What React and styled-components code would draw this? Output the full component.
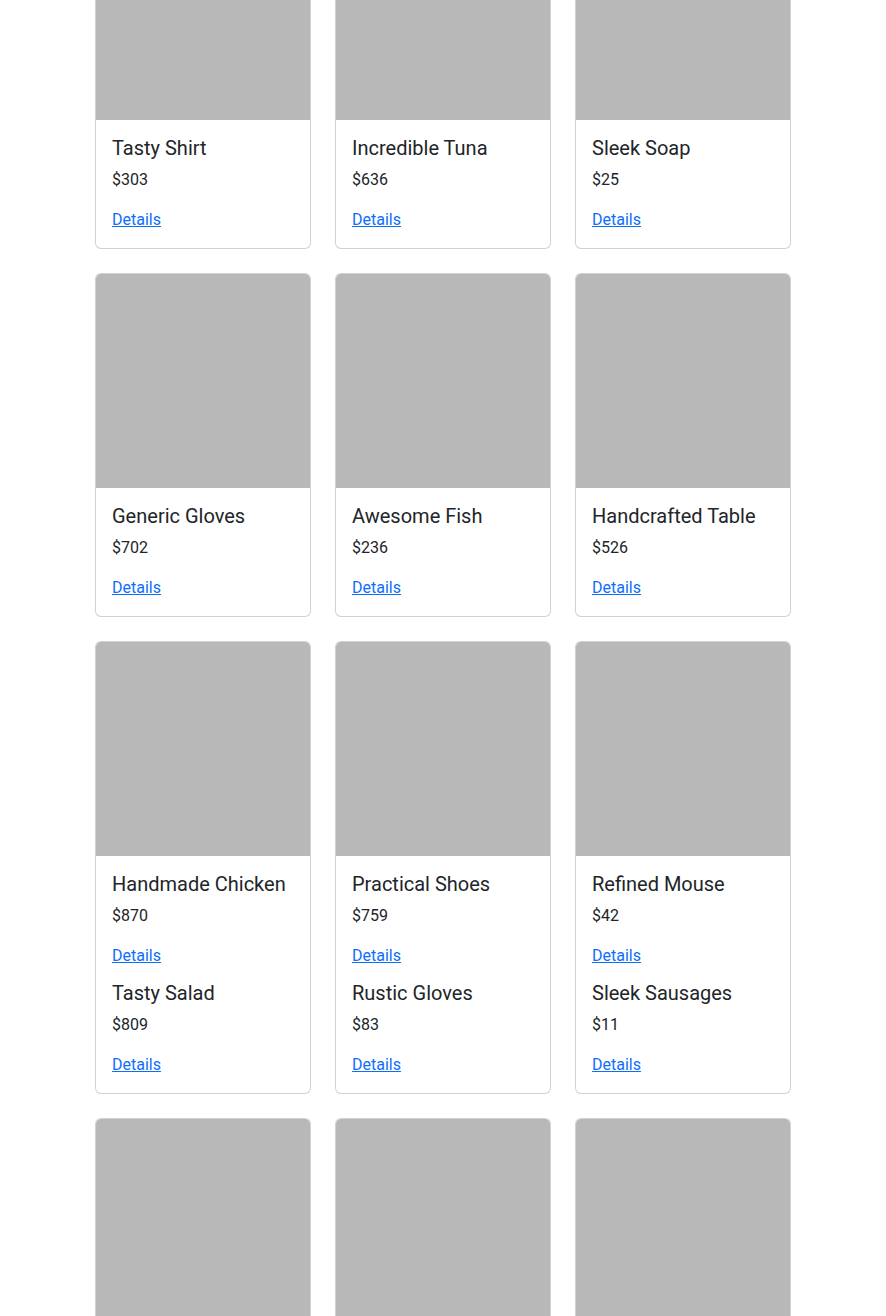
import React from "react";
import styled, { createGlobalStyle } from "styled-components";

const GlobalStyle = createGlobalStyle`
  body {
    margin: 0;
    font-family: Roboto, "Liberation Sans", sans-serif;
    font-size: 16px;
    line-height: 1.5;
    color: #212529;
    background: #fff;
  }
`;

const Container = styled.div`
  max-width: 696px;
  margin: -95px auto 0;
  padding: 0 12px;
`;

const Grid = styled.div`
  display: grid;
  grid-template-columns: repeat(3, 1fr);
  column-gap: 24px;
  row-gap: 24px;
  align-items: start;
`;

const Card = styled.div`
  display: flex;
  flex-direction: column;
  border: 1px solid rgba(0, 0, 0, 0.175);
  border-radius: 6px;
  overflow: hidden;
  background: #fff;
`;

const Thumb = styled.div`
  aspect-ratio: 1 / 1;
  background: #b8b8b8;
`;

const CardBody = styled.div`
  padding: 16px;
  display: flex;
  flex-direction: column;
  gap: 13px;
`;

const Item = styled.div`
  display: flex;
  flex-direction: column;
`;

const Title = styled.h5`
  margin: 0 0 8px;
  font-size: 20px;
  font-weight: 400;
  line-height: 1.2;
  white-space: nowrap;
`;

const Price = styled.p`
  margin: 0 0 16px;
`;

const DetailsLink = styled.a`
  color: #0d6efd;
  text-decoration: underline;
  align-self: flex-start;
`;

const cards = [
  [{ name: "Tasty Shirt", price: 303 }],
  [{ name: "Incredible Tuna", price: 636 }],
  [{ name: "Sleek Soap", price: 25 }],
  [{ name: "Generic Gloves", price: 702 }],
  [{ name: "Awesome Fish", price: 236 }],
  [{ name: "Handcrafted Table", price: 526 }],
  [
    { name: "Handmade Chicken", price: 870 },
    { name: "Tasty Salad", price: 809 },
  ],
  [
    { name: "Practical Shoes", price: 759 },
    { name: "Rustic Gloves", price: 83 },
  ],
  [
    { name: "Refined Mouse", price: 42 },
    { name: "Sleek Sausages", price: 11 },
  ],
  [],
  [],
  [],
];

const ProductCard = ({ items }) => (
  <Card>
    <Thumb />
    {items.length > 0 && (
      <CardBody>
        {items.map((item) => (
          <Item key={item.name}>
            <Title>{item.name}</Title>
            <Price>${item.price}</Price>
            <DetailsLink href="#">Details</DetailsLink>
          </Item>
        ))}
      </CardBody>
    )}
  </Card>
);

const App = () => {
  return (
    <>
      <GlobalStyle />
      <Container>
        <Grid>
          {cards.map((items, i) => (
            <ProductCard key={i} items={items} />
          ))}
        </Grid>
      </Container>
    </>
  );
};

export default App;
